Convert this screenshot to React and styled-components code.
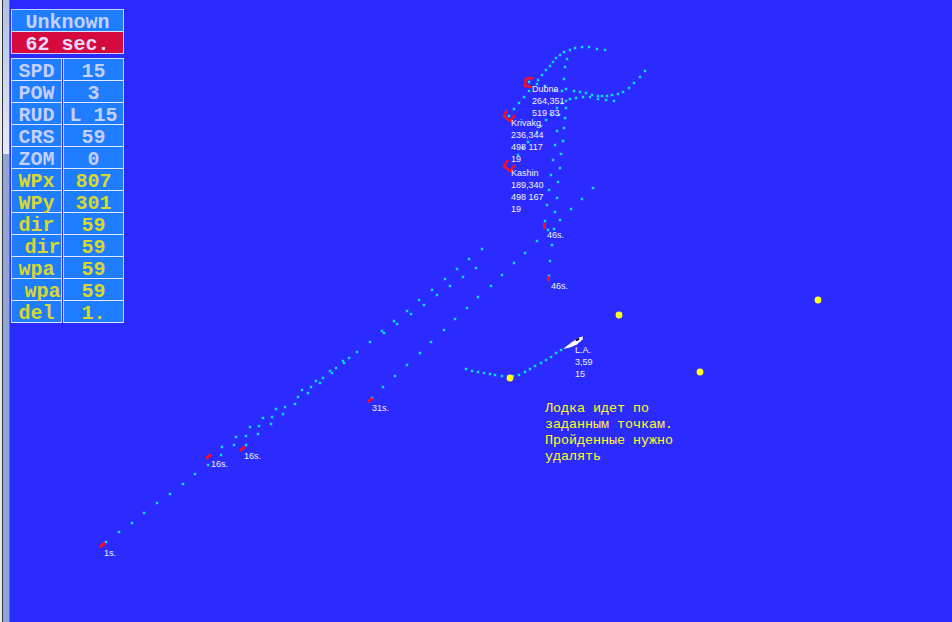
import styled, { createGlobalStyle } from "styled-components";

const GlobalStyle = createGlobalStyle`
  html, body {
    margin: 0;
    padding: 0;
    height: 100%;
    background: #2b2bff;
    overflow: hidden;
  }
  #root {
    height: 100%;
  }
`;

// dots read off the radar picture: [crop x, crop y, points at 3x]
const toPoints = (ox, oy, pts) => pts.map(([x, y]) => [ox + x / 3, oy + y / 3]);

const DOTS = [
  ...toPoints(455, 325, [
    [33, 132], [51, 137], [69, 141], [87, 144], [104, 147], [121, 151], [140, 154], [175, 153], [193, 149],
    [210, 142], [226, 132], [241, 123], [257, 114], [272, 104], [288, 96], [303, 85], [319, 75],
  ]),
  ...toPoints(300, 230, [
    [545, 56], [508, 86], [471, 116], [528, 114], [435, 147], [489, 141], [572, 167], [396, 180], [450, 168],
    [534, 201], [358, 211], [411, 196], [500, 234], [321, 242], [372, 224], [283, 272], [333, 252], [465, 267],
    [246, 304], [291, 281], [432, 300], [210, 335], [251, 308], [393, 336], [171, 366], [360, 369], [147, 384],
    [130, 394], [133, 398], [321, 404], [108, 414], [91, 422], [96, 428], [285, 439], [70, 443], [49, 452],
    [60, 459], [32, 471], [250, 472], [7, 481], [23, 490], [215, 505],
  ]),
  ...toPoints(180, 340, [
    [346, 191], [354, 171], [315, 200], [288, 207], [309, 222], [276, 230], [249, 234], [272, 252], [237, 258],
    [210, 261], [235, 283], [199, 288], [168, 291], [198, 314], [161, 316], [126, 321], [123, 345],
  ]),
  ...toPoints(90, 430, [
    [354, 104], [316, 133], [278, 162], [240, 191], [201, 220], [163, 249], [125, 278], [87, 307], [48, 336],
  ]),
  ...toPoints(490, 140, [
    [114, 7], [195, 15], [218, 3], [100, 25], [85, 44], [214, 42], [189, 59], [210, 84], [184, 104], [205, 127],
    [178, 150], [309, 144], [276, 176], [200, 173], [172, 196], [243, 208], [195, 217], [166, 242], [209, 239],
    [191, 267], [175, 271], [186, 315], [141, 304], [105, 338], [181, 362], [71, 370], [36, 404], [176, 408],
  ]),
  ...toPoints(490, 35, [
    [345, 44], [320, 41], [297, 37], [276, 37], [256, 39], [239, 44], [223, 51], [210, 60], [199, 69], [190, 80],
    [180, 92], [169, 106], [157, 120], [144, 136], [118, 142], [117, 168], [103, 186], [88, 205], [73, 222],
    [57, 242], [230, 71], [226, 97], [221, 131], [229, 163], [217, 167], [195, 165], [164, 153], [140, 147],
    [251, 167], [269, 171], [289, 175], [306, 179], [323, 183], [337, 184], [351, 184], [367, 181], [383, 176],
    [400, 170], [417, 158], [433, 144], [449, 126], [465, 109], [323, 191], [348, 194], [371, 197], [300, 187],
    [278, 185], [258, 188], [241, 193], [228, 197], [216, 203], [200, 218], [228, 220], [207, 241], [225, 248],
    [182, 240], [167, 256], [153, 272], [222, 280], [201, 287], [218, 318], [142, 290], [114, 322],
  ]),
];

const WAYPOINTS = [[619, 315], [818, 300], [700, 372], [510, 378]];

const TICKS = [
  "M544.5 223V229",
  "M548.5 276V281",
  "M368 402L372.5 398",
  "M206 458.5L211 454.5",
  "M240 451L245 446.5",
  "M100 547L105 543",
];

const TARGETS = [
  "M534 78L526 78.5L525 86L532 87",
  "M507 110L504 116L510 121L515 115",
  "M508 160L504 166L510 171L515 165",
];

const LABELS = [
  { x: 532, y: 83, lines: ["Dubna", "264,351", "519 83"] },
  { x: 511, y: 117, lines: ["Krivakg", "236,344", "498 117", "19"] },
  { x: 511, y: 167, lines: ["Kashin", "189,340", "498 167", "19"] },
  { x: 575, y: 344, lines: ["L.A.", "3,59", "15"] },
  { x: 547, y: 229, lines: ["46s."] },
  { x: 551, y: 280, lines: ["46s."] },
  { x: 372, y: 402, lines: ["31s."] },
  { x: 211, y: 458, lines: ["16s."] },
  { x: 244, y: 450, lines: ["16s."] },
  { x: 104, y: 547, lines: ["1s."] },
];

const STATS = [
  ["SPD", "15"],
  ["POW", "3"],
  ["RUD", "L 15"],
  ["CRS", "59"],
  ["ZOM", "0"],
  ["WPx", "807", true],
  ["WPy", "301", true],
  ["dir", "59", true],
  ["\u00a0dir", "59", true],
  ["wpa", "59", true],
  ["\u00a0wpa", "59", true],
  ["del", "1.", true],
];

export default function App() {
  return (
    <Page>
      <GlobalStyle />
      <ScrollStrip>
        <ScrollTrack>
          <ScrollThumb />
        </ScrollTrack>
      </ScrollStrip>
      <Content>
        <Panel>
          <TitleBox>
            <TitleRow>Unknown</TitleRow>
            <TimerRow>62 sec.</TimerRow>
          </TitleBox>
          <StatGrid>
            {STATS.map(([name, value, warm]) => (
              <StatRow key={name}>
                <Cell $warm={warm}>{name}</Cell>
                <Cell $warm={warm}>{value}</Cell>
              </StatRow>
            ))}
          </StatGrid>
        </Panel>
      </Content>
      <Radar viewBox="0 0 952 622">
        {DOTS.map(([x, y], i) => (
          <g key={i}>
            <rect x={Math.round(x) - 1.5} y={Math.round(y) - 1.5} width="3" height="3" fill="#2470ff" />
            <rect x={Math.round(x) - 1} y={Math.round(y) - 1} width="2" height="2" fill="#00e4f4" />
          </g>
        ))}
        {WAYPOINTS.map(([x, y]) => (
          <circle key={x} cx={x} cy={y} r="3.4" fill="#ffff18" />
        ))}
        {TICKS.map((d) => (
          <path key={d} d={d} stroke="#ff0a1e" strokeWidth="3" fill="none" />
        ))}
        {TARGETS.map((d) => (
          <path key={d} d={d} stroke="#f0102a" strokeWidth="2.6" fill="none" />
        ))}
        <path d="M563 349L572 342L579 337.5L583 336.5L582.5 339.5L577 344.5L570 347.5Z" fill="#ffffff" />
        <ellipse cx="577.5" cy="339.5" rx="2.2" ry="1.2" fill="#101030" transform="rotate(-30 577.5 339.5)" />
      </Radar>
      {LABELS.map((label) => (
        <MapLabel key={label.x + label.lines[0]} style={{ left: label.x, top: label.y }}>
          {label.lines.map((line) => (
            <div key={line}>{line}</div>
          ))}
        </MapLabel>
      ))}
      <Note>
        Лодка идет по
        <br />
        заданным точкам.
        <br />
        Пройденные нужно
        <br />
        удалять
      </Note>
    </Page>
  );
}

const Page = styled.div`
  position: relative;
  display: flex;
  width: 952px;
  height: 622px;
  overflow: hidden;
  background: #2b2bff;
`;

const ScrollStrip = styled.div`
  flex: none;
  display: flex;
  box-sizing: border-box;
  width: 10px;
  height: 100%;
  border-left: 2px solid #ececec;
  border-right: 1px solid #667078;
`;

const ScrollTrack = styled.div`
  flex: 1;
  position: relative;
  border-left: 1px solid #30343c;
  background: linear-gradient(#aec0e2, #e2e9f7 150px);
`;

const ScrollThumb = styled.div`
  position: absolute;
  left: 0;
  right: 0;
  top: 154px;
  bottom: 0;
  background: #8fa6d8;
`;

const Content = styled.div`
  flex: 1;
  padding: 9px 0 0 1px;
`;

const Panel = styled.div`
  display: flex;
  flex-direction: column;
  gap: 4px;
  width: 113px;
  font-family: "Liberation Mono", "Courier New", monospace;
  font-size: 20px;
  font-weight: 700;
  line-height: 25px;
  text-align: center;
  white-space: pre;
`;

const TitleBox = styled.div`
  border: 1px solid #c4d0ff;
  color: #c4d0ff;
`;

const TitleRow = styled.div`
  height: 21px;
  background: #1f7dff;
  border-bottom: 1px solid #dfe4ff;
`;

const TimerRow = styled.div`
  height: 21px;
  background: #d60a3c;
  color: #e6dcff;
`;

const StatGrid = styled.div`
  display: flex;
  flex-direction: column;
  border-top: 1px solid #d4dcff;
`;

const StatRow = styled.div`
  display: grid;
  grid-template-columns: 51px 61px;
  column-gap: 1px;
`;

const Cell = styled.div`
  box-sizing: border-box;
  height: 22px;
  background: #1f7dff;
  border: 1px solid #c4d0ff;
  border-top: 0;
  border-bottom-color: #e4e8ff;
  color: ${(p) => (p.$warm ? "#d8d82c" : "#c4d0ff")};
`;

const Radar = styled.svg`
  position: absolute;
  left: 0;
  top: 0;
  width: 952px;
  height: 622px;
`;

const MapLabel = styled.div`
  position: absolute;
  font-family: "Liberation Sans", Arial, sans-serif;
  font-size: 9px;
  line-height: 12px;
  color: #f0f0fa;
  white-space: nowrap;
`;

const Note = styled.div`
  position: absolute;
  left: 545px;
  top: 401px;
  font-family: "Liberation Mono", "Courier New", monospace;
  font-size: 13.33px;
  line-height: 16px;
  color: #ffff20;
  white-space: nowrap;
`;
